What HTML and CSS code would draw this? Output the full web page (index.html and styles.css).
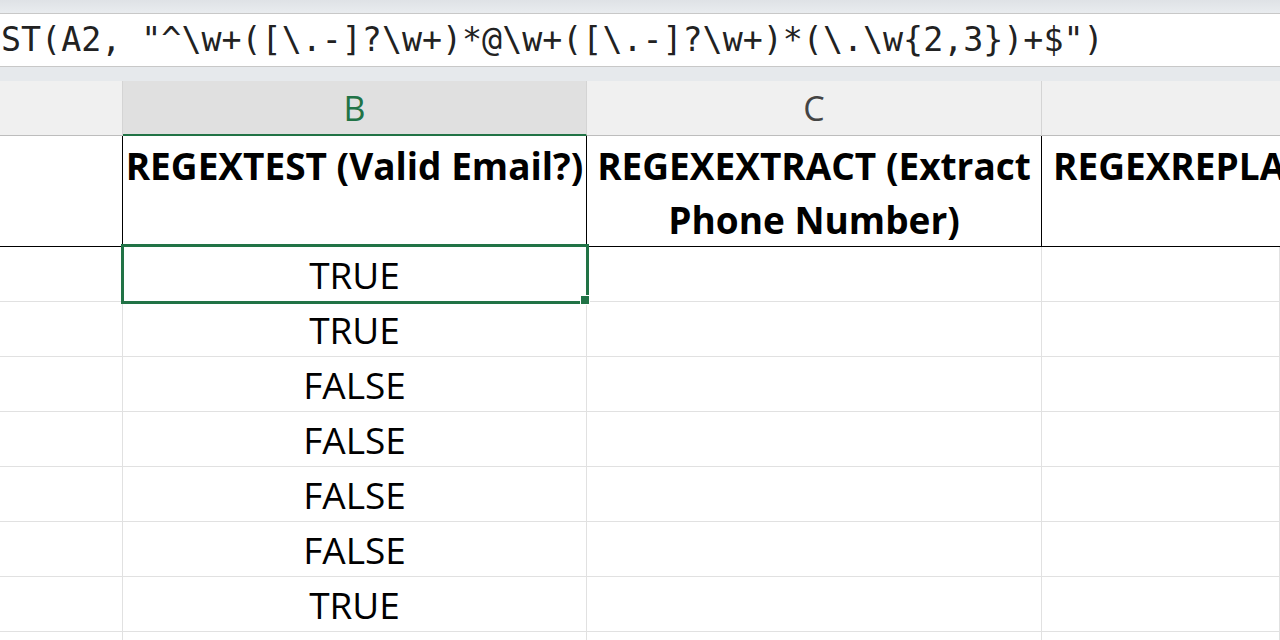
FILE: index.html
```html
<!DOCTYPE html>
<html>
<head>
<meta charset="utf-8">
<link rel="stylesheet" href="styles.css">
</head>
<body>
<div class="topband"></div>
<div class="fbar"><span class="ftext">ST(A2, "^\w+([\.-]?\w+)*@\w+([\.-]?\w+)*(\.\w{2,3})+$")</span></div>
<div class="band"></div>
<div class="sheet">
  <div class="ch">&nbsp;</div>
  <div class="ch ch-sel">B</div>
  <div class="ch">C</div>
  <div class="ch ch-last">&nbsp;</div>

  <div class="c hdr"></div>
  <div class="c hdr">REGEXTEST (Valid Email?)</div>
  <div class="c hdr">REGEXEXTRACT (Extract Phone Number)</div>
  <div class="c hdr hdr-d">REGEXREPLA</div>

  <div class="c"></div><div class="c val active">TRUE</div><div class="c"></div><div class="c"></div>
  <div class="c"></div><div class="c val">TRUE</div><div class="c"></div><div class="c"></div>
  <div class="c"></div><div class="c val">FALSE</div><div class="c"></div><div class="c"></div>
  <div class="c"></div><div class="c val">FALSE</div><div class="c"></div><div class="c"></div>
  <div class="c"></div><div class="c val">FALSE</div><div class="c"></div><div class="c"></div>
  <div class="c"></div><div class="c val">FALSE</div><div class="c"></div><div class="c"></div>
  <div class="c"></div><div class="c val">TRUE</div><div class="c"></div><div class="c"></div>
  <div class="c"></div><div class="c val"></div><div class="c"></div><div class="c"></div>
</div>
</body>
</html>
```
FILE: styles.css
```css
html, body {
  margin: 0;
  padding: 0;
  width: 1280px;
  height: 640px;
  overflow: hidden;
  background: #ffffff;
}
.topband {
  height: 13px;
  background: linear-gradient(#dfe2e6, #e9ecef);
}
.fbar {
  height: 52px;
  border-top: 1px solid #c8c8c8;
  border-bottom: 1px solid #c8c8c8;
  background: #ffffff;
  padding-left: 1px;
  font-family: "DejaVu Sans Mono", monospace;
  font-size: 33.3px;
  line-height: 52px;
  color: #222222;
  white-space: pre;
  overflow: hidden;
}
.band {
  height: 14px;
  background: #e6e9ec;
}
.sheet {
  display: grid;
  grid-template-columns: 123px 464px 455px 238px;
  grid-template-rows: 55px 111px repeat(8, 55px);
  font-family: "Open Sans", sans-serif;
}
.ch {
  box-sizing: border-box;
  background: #f0f0f0;
  border-right: 1px solid #d4d4d4;
  border-bottom: 1px solid #bdbdbd;
  color: #444444;
  font-size: 34px;
  line-height: 54px;
  text-align: center;
}
.ch-sel {
  background: #e0e0e0;
  color: #217346;
  border-bottom: 2px solid #217346;
}
.ch-last {
  border-right: none;
}
.c {
  box-sizing: border-box;
  border-right: 1px solid #e1e1e1;
  border-bottom: 1px solid #e1e1e1;
}
.hdr {
  border-right: 1px solid #000000;
  border-bottom: 1px solid #000000;
  font-weight: 700;
  font-size: 37px;
  line-height: 54px;
  text-align: center;
  color: #000000;
  padding: 3px 0 0;
  white-space: normal;
}
.hdr-d {
  text-align: left;
  padding-left: 11px;
  white-space: nowrap;
  overflow: hidden;
  border-right: none;
}
.val {
  font-size: 37px;
  line-height: 56px;
  text-align: center;
  color: #000000;
}
.active {
  position: relative;
}
.active::after {
  content: "";
  position: absolute;
  left: -2px;
  top: -3px;
  right: -3px;
  bottom: -3px;
  border: 3px solid #217346;
}
.active::before {
  content: "";
  position: absolute;
  right: -4px;
  bottom: -4px;
  width: 8px;
  height: 8px;
  background: #217346;
  border: 1px solid #ffffff;
  z-index: 2;
}
```
